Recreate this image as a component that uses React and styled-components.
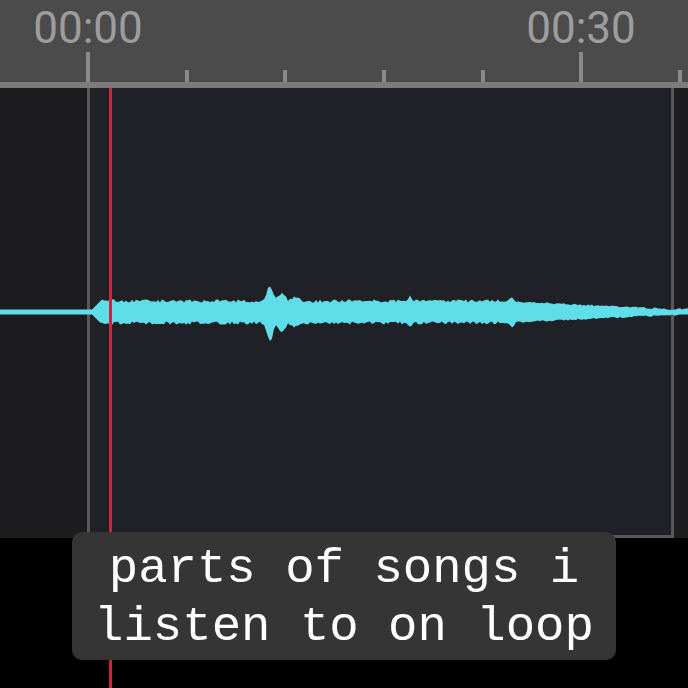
import styled, { createGlobalStyle } from "styled-components";

const GlobalStyle = createGlobalStyle`
    body {
        margin: 0;
        background: #000;
    }
`

const Page = styled.div`
    position: relative;
    width: 688px;
    height: 688px;
    overflow: hidden;
    background: #000;
    display: flex;
    flex-direction: column;
`

const Ruler = styled.div`
    height: 82px;
    flex-shrink: 0;
    background: #4b4b4b;
    border-bottom: 6px solid #7c7c7c;
    display: flex;
    flex-direction: column;
`

const Labels = styled.div`
    display: flex;
    gap: 373px;
    padding: 6px 0 0 28px;
    height: 46px;
`

const Label = styled.div`
    width: 120px;
    text-align: center;
    font-family: Roboto, "Liberation Sans", sans-serif;
    font-size: 44px;
    line-height: 44px;
    color: #9d9d9d;
`

const Ticks = styled.div`
    flex: 1;
    display: flex;
    align-items: flex-end;
    gap: 94.67px;
    padding-left: 86px;
`

const Tick = styled.div`
    width: 4px;
    height: ${p => (p.$major ? 30 : 12)}px;
    background: #8a8a8a;
`

const Track = styled.div`
    position: relative;
    height: 450px;
    flex-shrink: 0;
    background: #1d1d1f;
`

const Selection = styled.div`
    position: absolute;
    left: 87px;
    top: 0;
    bottom: 0;
    width: 581px;
    border: 3px solid #58585a;
    border-top: none;
    background: #202127;
`

const Wave = styled.svg`
    position: absolute;
    left: 0;
    top: 0;
`

const Playhead = styled.div`
    position: absolute;
    left: 109px;
    top: 88px;
    bottom: 0;
    width: 3px;
    background: #c42a3b;
    z-index: 1;
`

const Footer = styled.div`
    flex: 1;
    display: flex;
    justify-content: center;
    align-items: flex-start;
`

const Caption = styled.div`
    position: relative;
    z-index: 2;
    margin-top: -6px;
    width: 544px;
    height: 128px;
    box-sizing: border-box;
    padding-top: 8px;
    border-radius: 10px;
    background: #353535;
    color: #fff;
    font-family: "Courier New", "Liberation Mono", "DejaVu Sans Mono", monospace;
    font-size: 49px;
    line-height: 58px;
    text-align: center;
    white-space: pre;
`

const hash = (i) => {
    const s = Math.sin(i * 12.9898) * 43758.5453
    return s - Math.floor(s)
}

const bump = (x, c, w, h) => h * Math.exp(-(((x - c) / w) ** 2))

const amp = (x, side) => {
    if (x < 92) return 2.5
    if (x < 101) return 2.5 + ((x - 92) / 9) * 9
    let base
    if (x < 500) base = 11
    else if (x < 670) base = 11 - ((x - 500) / 170) * 8
    else base = 3
    const n = hash(x * 0.37 + side * 91.3)
    let a = base + (n - 0.5) * (x < 500 ? 3.2 : 1.6)
    a += bump(x, 270, 4, side ? 18 : 16) + bump(x, 282, 4, 9) + bump(x, 296, 5, 4)
    a += bump(x, 410, 2.5, 5) + bump(x, 512, 2.5, 5) + bump(x, 110, 2, 2)
    return a
}

const CY = 224

const wavePath = () => {
    const top = []
    const bottom = []
    for (let x = 0; x <= 688; x += 2) {
        top.push(`${x},${(CY - amp(x, 0)).toFixed(1)}`)
        bottom.push(`${x},${(CY + amp(x, 1)).toFixed(1)}`)
    }
    return `M${top.join("L")}L${bottom.reverse().join("L")}Z`
}

const ticks = [true, false, false, false, false, true, false]

const App = () => {
    return (
        <Page>
            <GlobalStyle />
            <Ruler>
                <Labels>
                    <Label>00:00</Label>
                    <Label>00:30</Label>
                </Labels>
                <Ticks>
                    {ticks.map((major, i) => <Tick key={i} $major={major} />)}
                </Ticks>
            </Ruler>
            <Track>
                <Selection />
                <Wave width="688" height="450" viewBox="0 0 688 450">
                    <path d={wavePath()} fill="#5fdde8" />
                </Wave>
            </Track>
            <Footer>
                <Caption>{"parts of songs i\nlisten to on loop"}</Caption>
            </Footer>
            <Playhead />
        </Page>
    )
}

export default App
